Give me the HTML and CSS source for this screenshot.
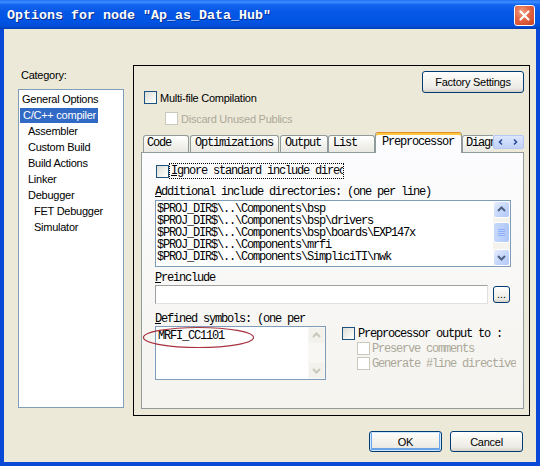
FILE: index.html
```html
<!DOCTYPE html>
<html>
<head>
<meta charset="utf-8">
<title>Options for node</title>
<link rel="stylesheet" href="styles.css">
</head>
<body>
<div class="window">
  <div class="titlebar">
    <span class="title">Options for node "Ap_as_Data_Hub"</span>
    <div class="close">
      <svg width="19" height="19" viewBox="0 0 19 19"><path d="M5.5 5.5 L13.5 13.5 M13.5 5.5 L5.5 13.5" stroke="#fff" stroke-width="2.2" stroke-linecap="round"/></svg>
    </div>
  </div>
  <div class="client">
    <div class="main">
      <div class="left">
        <div class="cat-label">Category:</div>
        <div class="listbox">
          <div class="item l1">General Options</div>
          <div class="item lsel"><span class="hl">C/C++ compiler</span></div>
          <div class="item l2">Assembler</div>
          <div class="item l2">Custom Build</div>
          <div class="item l2">Build Actions</div>
          <div class="item l2">Linker</div>
          <div class="item l2">Debugger</div>
          <div class="item l3">FET Debugger</div>
          <div class="item l3">Simulator</div>
        </div>
      </div>
      <div class="panel">
        <div class="panel-top"><div class="btn factory">Factory Settings</div></div>
        <div class="chk-row multi"><span class="cb"></span><span>Multi-file Compilation</span></div>
        <div class="chk-row discard disabled"><span class="cb dis"></span><span>Discard Unused Publics</span></div>
        <div class="tabs">
          <div class="tablist">
            <div class="tab t-code">Code</div>
            <div class="tab t-opt">Optimizations</div>
            <div class="tab t-out">Output</div>
            <div class="tab t-list">List</div>
            <div class="tab t-pre active">Preprocessor</div>
            <div class="tab t-diag">Diagnostics</div>
          </div>
          <div class="tab-arrows">
            <svg width="31" height="14" viewBox="0 0 31 14"><path d="M9 4.5 L6.5 7 L9 9.5" stroke="#2B4C9B" stroke-width="1.6" fill="none"/><path d="M21 4.5 L23.5 7 L21 9.5" stroke="#2B4C9B" stroke-width="1.6" fill="none"/></svg>
          </div>
        </div>
        <div class="tabpage">
          <div class="ignore-row">
            <span class="cb"></span>
            <span class="focus-label"><u>I</u>gnore standard include directories</span>
          </div>
          <div class="lbl lbl-add"><u>A</u>dditional include directories: (one per line)</div>
          <div class="edit include">
            <div class="lines">
              <div>$PROJ_DIR$\..\Components\bsp</div>
              <div>$PROJ_DIR$\..\Components\bsp\drivers</div>
              <div>$PROJ_DIR$\..\Components\bsp\boards\EXP147x</div>
              <div>$PROJ_DIR$\..\Components\mrfi</div>
              <div>$PROJ_DIR$\..\Components\SimpliciTI\nwk</div>
            </div>
            <div class="vscroll">
              <div class="sb-btn"><svg width="15" height="15" viewBox="0 0 15 15"><path d="M4 9 L7.5 5.5 L11 9" stroke="#4D6185" stroke-width="2" fill="none"/></svg></div>
              <div class="sb-track"><div class="sb-thumb"><svg width="15" height="19" viewBox="0 0 15 19"><path d="M4 6.5 H11 M4 8.5 H11 M4 10.5 H11 M4 12.5 H11" stroke="#8CB0F8" stroke-width="1"/></svg></div></div>
              <div class="sb-btn"><svg width="15" height="15" viewBox="0 0 15 15"><path d="M4 6 L7.5 9.5 L11 6" stroke="#4D6185" stroke-width="2" fill="none"/></svg></div>
            </div>
          </div>
          <div class="lbl lbl-pre"><u>P</u>reinclude</div>
          <div class="input-row">
            <div class="edit single"></div>
            <div class="btn browse">...</div>
          </div>
          <div class="lbl lbl-def"><u>D</u>efined symbols: (one per line)</div>
          <div class="lower-row">
            <div class="edit defined">
              <div class="lines sym">MRFI_CC1101</div>
              <div class="vscroll off">
                <div class="sb-btn"><svg width="15" height="15" viewBox="0 0 15 15"><path d="M4 9 L7.5 5.5 L11 9" stroke="#C9C7BA" stroke-width="2" fill="none"/></svg></div>
                <div class="sb-track"></div>
                <div class="sb-btn"><svg width="15" height="15" viewBox="0 0 15 15"><path d="M4 6 L7.5 9.5 L11 6" stroke="#C9C7BA" stroke-width="2" fill="none"/></svg></div>
              </div>
            </div>
            <svg class="circle" width="114" height="24" viewBox="0 0 114 24"><ellipse cx="56.5" cy="11.5" rx="55" ry="10" stroke="#A8333F" stroke-width="1.2" fill="none"/></svg>
            <div class="pp-col">
              <div class="chk-row pp"><span class="cb"></span><span>Preprocessor output to :</span></div>
              <div class="chk-row pp sub disabled"><span class="cb dis"></span><span>Preserve comments</span></div>
              <div class="chk-row pp sub disabled"><span class="cb dis"></span><span>Generate #line directives</span></div>
            </div>
          </div>
        </div>
      </div>
    </div>
    <div class="buttons">
      <div class="btn dlg default">OK</div>
      <div class="btn dlg">Cancel</div>
    </div>
  </div>
</div>
</body>
</html>
```
FILE: styles.css
```css
* { box-sizing: border-box; }
html, body { margin: 0; padding: 0; }
body {
  width: 540px; height: 466px; overflow: hidden;
  font-family: "Liberation Sans", Arial, sans-serif;
  font-size: 11px; letter-spacing: -0.25px; color: #000;
}
.window {
  width: 540px; height: 466px;
  display: flex; flex-direction: column;
  background: #0A49D6;
}
.titlebar {
  height: 29px; flex: none;
  display: flex; align-items: flex-start;
  padding: 0 5px 0 7px;
  background: linear-gradient(#1F6FF2 0%, #3D8EFF 7%, #1366F0 16%, #0758E6 40%, #0054E3 75%, #004CD6 92%, #003BB0 100%);
}
.title {
  margin-top: 8px;
  font-family: "Liberation Mono", monospace;
  font-weight: bold; font-size: 13.33px; letter-spacing: 0;
  line-height: 16px; color: #fff; white-space: pre;
  text-shadow: 1px 1px 0 #0A2D8C;
}
.close {
  margin-left: auto; margin-top: 5px;
  width: 21px; height: 21px;
  border: 1px solid #fff; border-radius: 3px;
  background: radial-gradient(circle at 35% 30%, #F0A080 0%, #E5694A 40%, #C8401C 100%);
  display: flex; align-items: center; justify-content: center;
}
.client {
  flex: 1;
  margin: 0 4px 4px 4px;
  background: #ECE9D8;
  display: flex; flex-direction: column;
}
.main { display: flex; margin-top: 36px; }
.left { width: 106px; margin-left: 14px; padding-top: 4px; }
.cat-label { line-height: 13px; padding-left: 3px; }
.listbox {
  margin-top: 7px; height: 319px;
  background: #fff; border: 1px solid #7F9DB9;
  padding-top: 1px;
}
.item { height: 16px; line-height: 16px; white-space: nowrap; }
.l1 { padding-left: 3px; }
.l2 { padding-left: 9px; }
.l3 { padding-left: 15px; }
.lsel { padding-left: 1px; }
.hl { display: inline-block; background: #316AC5; color: #fff; padding: 0 2px 0 3px; line-height: 15px; }

.panel {
  margin-left: 9px; width: 397px; height: 351px;
  border: 1px solid #000;
  display: flex; flex-direction: column;
}
.panel-top { display: flex; justify-content: flex-end; padding: 5px 5px 0 0; }
.btn {
  display: flex; align-items: center; justify-content: center;
  border: 1px solid #003C74; border-radius: 3px;
  background: linear-gradient(#FFFFFF 0%, #F5F4EF 40%, #ECEBE6 80%, #D6D0C5 100%);
  white-space: nowrap;
}
.factory { width: 102px; height: 22px; }
.chk-row { display: flex; align-items: center; height: 13px; white-space: nowrap; }
.cb {
  flex: none; width: 13px; height: 13px;
  border: 1px solid #1C5180;
  background: linear-gradient(135deg, #DCDCD7 0%, #F2F2EE 60%, #FFFFFF 100%);
  margin-right: 3px;
}
.cb.dis { border-color: #CAC8BB; background: #fff; }
.disabled { color: #ACA899; }
.multi { margin-top: -2px; padding-left: 10px; }
.discard { margin-top: 8px; padding-left: 31px; }

.tabs {
  margin-top: 7px; margin-left: 7px; width: 383px; height: 21px;
  display: flex;
}
.tablist {
  flex: 1; display: flex; align-items: flex-end;
  overflow: hidden; padding-left: 2px; height: 21px;
}
.tab {
  flex: none; height: 17px; margin-bottom: 1px;
  border: 1px solid #919B9C; border-bottom: none;
  border-radius: 3px 3px 0 0;
  background: linear-gradient(#FFFFFF, #F3F3EF 50%, #E9E8E2);
  font-family: "Liberation Mono", monospace; font-size: 12px; letter-spacing: -1.2px;
  line-height: 15px; padding-left: 4px; white-space: nowrap; overflow: hidden;
}
.t-code { width: 46px; margin-right: 1px; padding-left: 3px; }
.t-opt { width: 89px; margin-right: 1px; }
.t-out { width: 48px; }
.t-list { width: 47px; }
.t-pre { width: 87px; }
.t-diag { width: 50px; padding-left: 3px; }
.tab.active {
  height: 21px; margin-bottom: 0;
  position: relative; z-index: 2;
  background: #FCFCFE;
  border-top: 1px solid #E68B2C;
  box-shadow: inset 0 2px 0 #FFC73C;
  padding-top: 2px; padding-left: 6px;
}
.tab-arrows {
  flex: none; width: 31px; height: 14px; margin-top: 3px;
  background: linear-gradient(#DCE6FC, #C0D2F8);
  border: 1px solid #B4C8F4; border-radius: 2px;
  display: flex;
}
.tab-arrows svg { margin: -1px; }

.tabpage {
  margin-left: 7px; margin-top: -1px;
  width: 383px; height: 257px;
  border: 1px solid #919B9C;
  background: linear-gradient(#FCFCFE, #F4F3EE);
  padding-left: 13px;
  font-family: "Liberation Mono", monospace; font-size: 12px; letter-spacing: -1.2px;
}
.ignore-row { display: flex; align-items: center; height: 16px; margin-top: 10px; }
.ignore-row .cb { margin-left: 1px; margin-right: 0; }
.focus-label {
  width: 175px; height: 16px; line-height: 14px;
  border: 1px dotted #000; padding-left: 1px;
  white-space: nowrap; overflow: hidden;
}
.lbl { line-height: 12px; height: 12px; white-space: nowrap; overflow: hidden; }
.lbl-add { margin-top: 7px; }
.lbl-pre { margin-top: 5px; }
.lbl-def { margin-top: 9px; width: 153px; }
.edit { border: 1px solid #7F9DB9; background: #fff; display: flex; }
.include { margin-top: 2px; width: 356px; height: 67px; }
.lines { flex: 1; padding: 2px 0 0 1px; line-height: 12px; white-space: nowrap; overflow: hidden; }
.vscroll { flex: none; width: 17px; display: flex; flex-direction: column; background: #F4F3EE; }
.sb-btn {
  flex: none; width: 17px; height: 17px;
  border: 1px solid #fff; border-radius: 3px;
  background: linear-gradient(135deg, #E6EEFE 0%, #C8D8FB 50%, #B4C8F6 100%);
  display: flex; align-items: center; justify-content: center;
}
.sb-track { flex: 1; padding: 4px 0 0 0; }
.sb-thumb {
  height: 21px; border: 1px solid #fff; border-radius: 3px;
  background: linear-gradient(90deg, #C8D8FB, #BCD0FA 50%, #AFC6F6);
  display: flex; align-items: center; justify-content: center;
}
.vscroll.off { background: #F8F7F3; }
.vscroll.off .sb-btn { background: #F2F1EB; border-color: #F8F7F3; }
.input-row { display: flex; align-items: center; margin-top: 1px; height: 19px; }
.single { width: 333px; height: 19px; border-color: #A0A0A0 #E0E0E0 #E0E0E0 #A0A0A0; }
.browse {
  width: 17px; height: 17px; margin-left: 5px;
  font-family: "Liberation Sans", sans-serif; font-size: 11px; letter-spacing: 0;
  align-items: flex-end; line-height: 12px; padding-bottom: 2px;
}
.lower-row { display: flex; margin-top: 1px; position: relative; }
.defined { width: 171px; height: 54px; }
.sym { padding: 3px 0 0 2px; }
.circle { position: absolute; left: -13px; top: 0; }
.pp-col { margin-left: 16px; width: 174px; overflow: hidden; padding-top: 1px; display: flex; flex-direction: column; gap: 2px; }
.pp .cb { margin-right: 3px; }
.pp.sub { padding-left: 15px; }
.pp.sub .cb { margin-right: 2px; }

.buttons { display: flex; justify-content: flex-end; gap: 8px; margin-top: 15px; padding-right: 13px; }
.dlg { width: 73px; height: 21px; }
.default { box-shadow: inset 0 0 0 1px #CEE7FF, inset 0 -1px 0 2px #69A3E8; }
```
